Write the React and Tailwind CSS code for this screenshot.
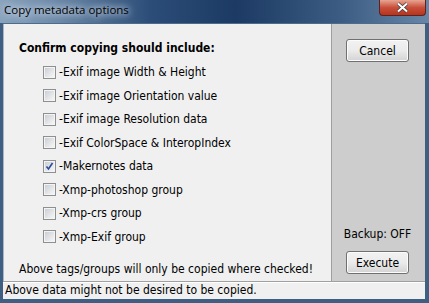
import React, { useState } from 'react';

const options = [
    { label: '-Exif image Width & Height', checked: false },
    { label: '-Exif image Orientation value', checked: false },
    { label: '-Exif image Resolution data', checked: false },
    { label: '-Exif ColorSpace & InteropIndex', checked: false },
    { label: '-Makernotes data', checked: true },
    { label: '-Xmp-photoshop group', checked: false },
    { label: '-Xmp-crs group', checked: false },
    { label: '-Xmp-Exif group', checked: false },
];

const CheckBox = ({ checked, onClick }) => (
    <span
        onClick={onClick}
        className="w-[13px] h-[13px] border border-[#8e8f8f] bg-[#f4f4f4] flex items-center justify-center shrink-0"
    >
        <span className="w-[9px] h-[9px] bg-gradient-to-br from-[#cbcfd5] to-[#f6f6f6] flex items-center justify-center">
            {checked && (
                <svg width="9" height="9" viewBox="0 0 9 9">
                    <path d="M1.5 4.5 L3.5 7 L7.5 1" fill="none" stroke="#2a4a9c" strokeWidth="1.6" />
                </svg>
            )}
        </span>
    </span>
);

const WinButton = ({ children }) => (
    <button className="w-[63px] h-[23px] rounded-[3px] border border-[#707070] bg-gradient-to-b from-[#f2f2f2] via-[#ebebeb] to-[#d3d3d3] text-[12px] text-black shadow-[inset_0_0_0_1px_#fcfcfc]">
        {children}
    </button>
);

const App = () => {
    const [items, setItems] = useState(options);

    const toggle = (i) => {
        setItems(items.map((it, idx) => (idx === i ? { ...it, checked: !it.checked } : it)));
    };

    return (
        <div
            className="w-[429px] h-[303px] flex flex-col bg-[#3f5f82] overflow-hidden"
            style={{ fontFamily: '"DejaVu Sans Condensed", "DejaVu Sans", "Liberation Sans", sans-serif' }}
        >
            {/* Title bar */}
            <div className="h-[23px] shrink-0 relative bg-[linear-gradient(90deg,#8aa3bd_0%,#6f8cab_12%,#2c4d78_35%,#1c3a63_55%,#3d5d84_80%,#6886a6_100%)]">
                <span
                    className="absolute left-[3px] top-[2px] text-[11.5px] text-black leading-[16px] px-[1px] [text-shadow:0_0_6px_#dfe8f2,0_0_10px_#dfe8f2]"
                    style={{ fontFamily: '"Open Sans", "Noto Sans", sans-serif' }}
                >
                    Copy metadata options
                </span>
                <div className="absolute left-[379px] top-0 w-[47px] h-[16px] rounded-b-[4px] border border-t-0 border-[#5b2222] bg-gradient-to-b from-[#e8a493] via-[#c74f3b] to-[#b8331c] flex items-center justify-center">
                    <svg width="13" height="11" viewBox="0 0 13 11">
                        <path d="M2 1.5 L11 9.5 M11 1.5 L2 9.5" stroke="#3b3b3b" strokeWidth="3.4" />
                        <path d="M2 1.5 L11 9.5 M11 1.5 L2 9.5" stroke="#ffffff" strokeWidth="2" />
                    </svg>
                </div>
            </div>

            {/* Client area */}
            <div className="flex-1 flex flex-col ml-[3px] mr-[4px] border-t border-[#4d6b8c]">
                <div className="flex-1 flex">
                    <div className="w-[328px] bg-[#f0f0f0] border-l border-[#a9b6c4] pl-[15px] pt-[16px] flex flex-col">
                        <div className="text-[12px] font-bold text-black leading-[16px]">Confirm copying should include:</div>
                        <div className="flex flex-col pl-[24px] mt-[8px] gap-[7.5px]">
                            {items.map((it, i) => (
                                <label key={it.label} className="flex items-center h-[16px] gap-[3px] text-[12px] text-black">
                                    <CheckBox checked={it.checked} onClick={() => toggle(i)} />
                                    <span>{it.label}</span>
                                </label>
                            ))}
                        </div>
                        <div className="mt-[16px] text-[12px] text-black leading-[16px]">
                            Above tags/groups will only be copied where checked!
                        </div>
                    </div>
                    <div className="flex-1 bg-[#cdcdcd] border-l border-[#9e9e9e] flex flex-col items-center pt-[15px] pb-[7px] pr-[2px]">
                        <WinButton>Cancel</WinButton>
                        <div className="flex-1" />
                        <div className="text-[12px] text-black leading-[15px] mb-[9px]">Backup: OFF</div>
                        <WinButton>Execute</WinButton>
                    </div>
                </div>
                <div className="h-[18px] shrink-0 bg-[#f0f0f0] border-t border-[#a0a0a0] shadow-[inset_0_1px_0_#ffffff] text-[12px] text-black leading-[17px] pl-[2px]">
                    Above data might not be desired to be copied.
                </div>
            </div>
            <div className="h-[4px] shrink-0" />
        </div>
    );
};

export default App;
